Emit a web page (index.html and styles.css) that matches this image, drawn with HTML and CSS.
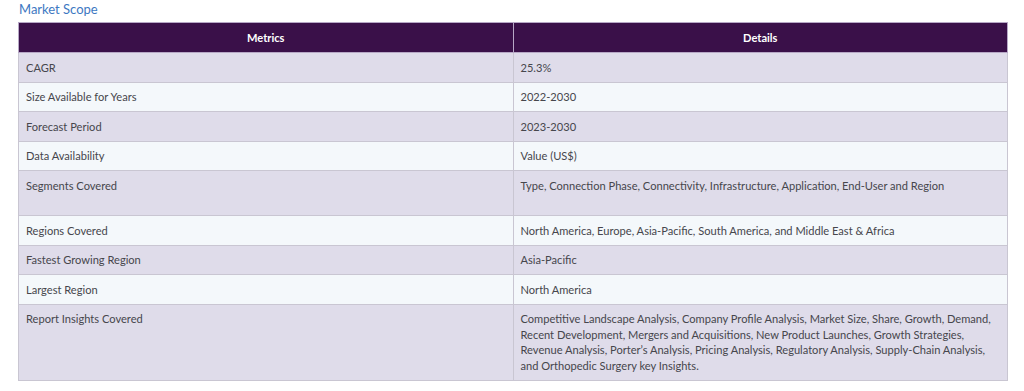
FILE: index.html
```html
<!DOCTYPE html>
<html lang="en">
<head>
<meta charset="utf-8">
<title>Market Scope</title>
<link rel="stylesheet" href="styles.css">
</head>
<body>
<div class="page">
  <h4 class="title">Market Scope</h4>
  <table class="scope">
    <thead>
      <tr><th>Metrics</th><th>Details</th></tr>
    </thead>
    <tbody>
      <tr><td>CAGR</td><td>25.3%</td></tr>
      <tr><td>Size Available for Years</td><td>2022-2030</td></tr>
      <tr><td>Forecast Period</td><td>2023-2030</td></tr>
      <tr><td>Data Availability</td><td>Value (US$)</td></tr>
      <tr class="tall"><td>Segments Covered</td><td>Type, Connection Phase, Connectivity, Infrastructure, Application, End-User and Region</td></tr>
      <tr><td>Regions Covered</td><td>North America, Europe, Asia-Pacific, South America, and Middle East &amp; Africa</td></tr>
      <tr><td>Fastest Growing Region</td><td>Asia-Pacific</td></tr>
      <tr><td>Largest Region</td><td>North America</td></tr>
      <tr><td>Report Insights Covered</td><td>Competitive Landscape Analysis, Company Profile Analysis, Market Size, Share, Growth, Demand, Recent Development, Mergers and Acquisitions, New Product Launches, Growth Strategies, Revenue Analysis, Porter’s Analysis, Pricing Analysis, Regulatory Analysis, Supply-Chain Analysis, and Orthopedic Surgery key Insights.</td></tr>
    </tbody>
  </table>
</div>
</body>
</html>
```
FILE: styles.css
```css
html, body {
  margin: 0;
  padding: 0;
  background: #ffffff;
}
.page {
  padding: 0 16px 0 18px;
  font-family: Lato, "Open Sans", "Liberation Sans", sans-serif;
}
.title {
  margin: 0;
  padding: 0 0 0 1px;
  height: 22px;
  font-size: 13px;
  font-weight: 400;
  line-height: 18px;
  color: #3d78c2;
}
.scope {
  width: 990px;
  border-collapse: collapse;
  table-layout: fixed;
  font-size: 11.1px;
  color: #46464c;
}
.scope th {
  background: #3a1049;
  color: #ffffff;
  font-weight: 700;
  height: 29px;
  padding: 0 6px;
  text-align: center;
  border: 1px solid #b7a8c6;
  line-height: 15px;
}
.scope td {
  padding: 6.6px 6px 6.6px 7px;
  line-height: 15.4px;
  vertical-align: top;
  text-align: left;
  border: 1px solid #c9c6d2;
}
.scope .tall td {
  padding-bottom: 21.6px;
}
.scope td:first-child {
  width: 483px;
}
.scope tbody tr:nth-child(odd) td {
  background: #dfdcea;
}
.scope tbody tr:nth-child(even) td {
  background: #f4f8fb;
}
```
